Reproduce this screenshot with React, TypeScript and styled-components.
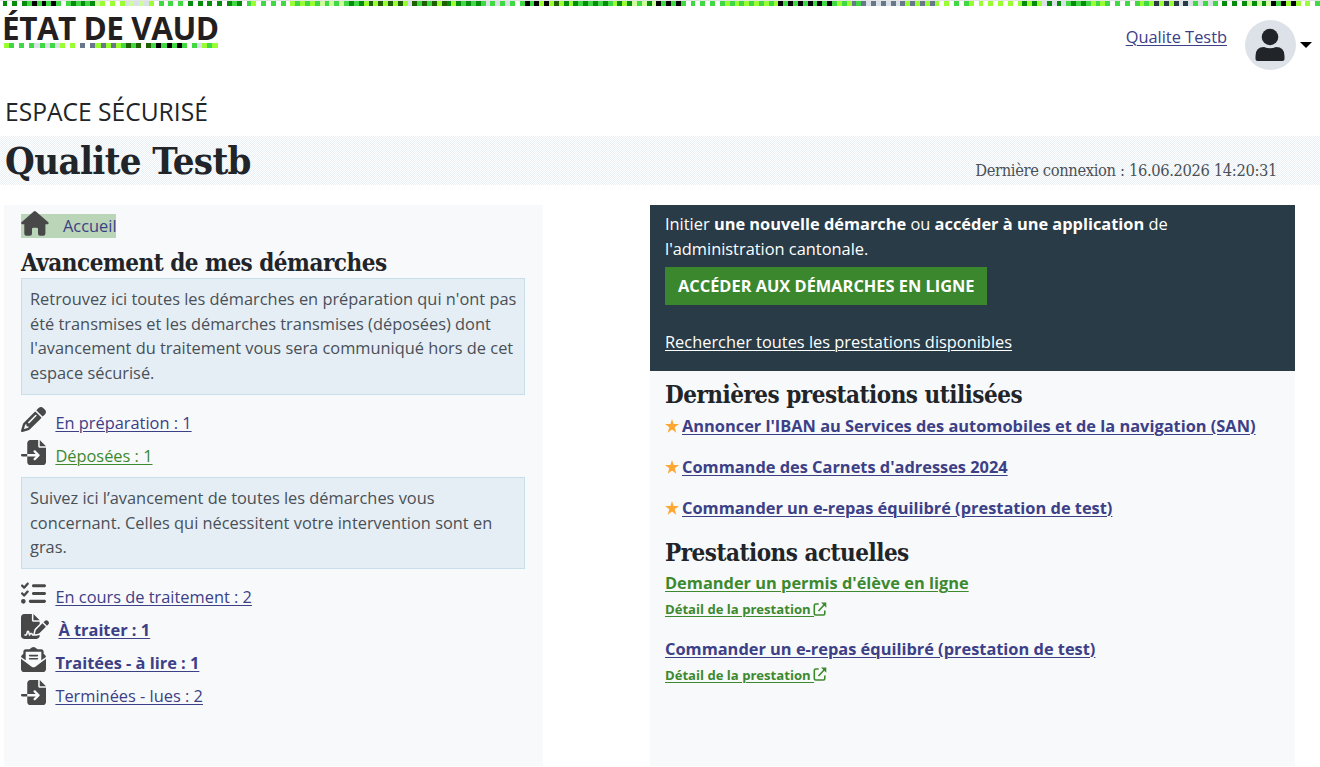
import React from 'react';
import styled, { createGlobalStyle } from 'styled-components';
import { FaPencil, FaFileImport, FaFileSignature, FaListCheck, FaEnvelopeOpenText } from 'react-icons/fa6';

const GlobalStyle = createGlobalStyle`
  * { box-sizing: border-box; }
  body {
    margin: 0;
    background: #fff;
    color: #212529;
    font: 16.39px/24.6px "Open Sans", "Noto Sans", sans-serif;
    overflow: hidden;
  }
  h1, h2, p, ul { margin: 0; padding: 0; }
  ul { list-style: none; }
`;

const palette: Record<string, string> = {
  W: '#ffffff', D: '#058c0c', G: '#40d944', L: '#99ff33', P: '#ccff99',
  S: '#d9e0e6', N: '#66788a', V: '#283b47', K: '#000000', F: '#1f6100',
};

const stripes = (cells: string, size: number, start: number) =>
  `linear-gradient(to right, #fff ${start}px, ${cells
    .split('')
    .map((c, i) => `${palette[c]} ${(start + i * size).toFixed(2)}px ${(start + (i + 1) * size).toFixed(2)}px`)
    .join(', ')})`;

const TOP_CELLS = [
  'DWDWDGKGKGKGWGDGDGDP',
  'LWLWLSPSPSLWGWGWGWDW',
  'DWDWDWDGDWGLWGWGWGWL',
  'GLGLGPGPGPGDGDLFLFLF',
  'LFLSFGFGFLFDLDGDGDGS',
  'GSGSGWGKGKLKLFLDLDGD',
  'GDGDGLDLDPGPDPKGKGKG',
  'WGWGWGWGLGLGLGLGLGLK',
  'GKGKGKGKGKGLGLNGNSNS',
  'NSNSNLNLNLNLWLWGWGLW',
  'LWLWLWLWLDLDLSDSDSGD',
  'GDGLGLGWGWGWGLGLVLVL',
  'VSVSGSGSGWDWDWDPDPDP',
  'KGKLKLWLWGD',
].join('');
const LOGO_CELLS = 'LGWGWGSGSGSLWLWNWNLNLNLGFGFWFGKGKGKGWGSLGL';

const PixelBar = styled.div`
  height: 6px;
  border-top: 1px solid #e4e4e4;
  background: ${stripes(TOP_CELLS, 4.88, 2.5)};
`;
const Header = styled.header`
  display: flex;
  justify-content: space-between;
  align-items: flex-start;
  height: 85px;
  padding: 0 8px 0 2px;
`;
const Logo = styled.div`
  width: 216px;
  height: 37px;
  padding-top: 3px;
  color: #231f20;
  font-size: 31.5px;
  line-height: 37px;
  font-weight: 700;
  white-space: nowrap;
  letter-spacing: -0.5px;
`;
const LogoCells = styled.div`
  height: 5px;
  margin-left: 2px;
  background: ${stripes(LOGO_CELLS, 5.08, 0)};
`;
const User = styled.div`
  display: flex;
  align-items: center;
  padding-top: 14px;
`;
const Avatar = styled.span`
  display: flex;
  width: 51px;
  height: 50px;
  margin: 0 4px 0 18px;
  border-radius: 50%;
  background: #dce2e7;
`;
const Caret = styled.span`
  border: 6px solid transparent;
  border-top: 6px solid #000;
  border-bottom: 0;
`;
const Link = styled.a<{ $green?: boolean; $bold?: boolean; $small?: boolean }>`
  color: ${p => (p.$green ? '#3c892e' : '#3c4086')};
  font-weight: ${p => (p.$bold ? 700 : 400)};
  font-size: ${p => (p.$small ? '13.1px' : 'inherit')};
  text-decoration: underline;
  text-decoration-thickness: 1px;
  text-underline-offset: 2px;
  white-space: nowrap;
`;
const UserLink = styled(Link)`
  padding-bottom: 16px;
`;
const Overline = styled.p`
  height: 45px;
  padding: 3px 5px 0;
  font-size: 24.6px;
  line-height: 35px;
`;
const TitleBand = styled.div`
  display: flex;
  justify-content: space-between;
  height: 49px;
  padding: 0 43px 0 5px;
  background: repeating-conic-gradient(#e9f0f6 0 25%, #fff 0 50%) 0 0 / 2px 2px;
`;
const slab = '"Roboto Slab", "DejaVu Serif Condensed", "DejaVu Serif", serif';
const Title = styled.h1`
  font: 700 38px/49px ${slab};
  letter-spacing: -0.62px;
`;
const LastLogin = styled.p`
  padding-top: 22px;
  color: #495057;
  font: 300 16.4px/26px ${slab};
  letter-spacing: -0.38px;
`;
const Columns = styled.main`
  display: flex;
  justify-content: space-between;
  height: 561px;
  margin: 20px 25px 0 4px;
`;
const Panel = styled.section<{ $width: number }>`
  width: ${p => p.$width}px;
  background: #f8f9fb;
`;
const LeftPanel = styled(Panel)`
  padding: 9px 17px 0;
`;
const Home = styled.a`
  display: flex;
  width: 95px;
  height: 24px;
  margin-bottom: 8px;
  background: #bad5b8;
  color: #3c4086;
  svg { margin: -3px 14px 0 0; flex: none; }
`;
const Heading = styled.h2`
  height: 32px;
  font: 700 24px/33px ${slab};
  letter-spacing: -0.5px;
  white-space: nowrap;
`;
const LaterHeading = styled(Heading)`
  padding: 3px 0;
  height: 38px;
`;
const Info = styled.p<{ $lines: number }>`
  width: 504px;
  height: ${p => p.$lines * 24.6 + 18.4}px;
  padding: 8px;
  border: 1px solid #c8dfeb;
  background: #e5eef5;
  color: #495057;
  white-space: nowrap;
`;
const StatusList = styled.ul`
  padding: 11.7px 0 4.6px;
  & ~ & { padding-top: 11.1px; }
`;
const StatusRow = styled.li`
  display: flex;
  align-items: center;
  height: 33px;
  svg { height: 25px; color: #484848; margin-top: -6px; }
`;
const IconSlot = styled.span<{ $wide?: boolean }>`
  display: flex;
  width: ${p => (p.$wide ? 37.4 : 34.4)}px;
`;
const Promo = styled.div`
  height: 166px;
  padding: 7px 15px;
  background: #283b47;
  color: #fff;
`;
const Button = styled.a`
  display: block;
  width: 322px;
  height: 38px;
  margin: 6px 0 25px;
  padding-left: 13px;
  background: #3b872e;
  font-weight: 700;
  line-height: 38px;
  white-space: nowrap;
`;
const WhiteLink = styled(Link)`
  color: #fff;
`;
const Services = styled.div`
  padding: 7px 15px;
`;
const Recent = styled.li`
  display: flex;
  align-items: center;
  height: 41px;
  padding-bottom: 9px;
  svg { margin-right: 3px; }
`;
const Current = styled.li`
  height: 65.5px;
`;
const Detail = styled.div`
  display: flex;
  align-items: center;
  height: 27.6px;
  svg { margin: 0 0 1px -1px; }
`;

const HouseIcon = () => (
  <svg width="28" height="25" viewBox="0 0 28 25" fill="#484848">
    <path d="M12.7.5 Q13.8-.4 14.9.5 L27.3 11.2 Q28.2 12.8 26.5 13.2 H24.4 V22.5 Q24.4 24.7 22.2 24.7 H19 Q17 24.7 17 22.5 V18 Q17 16.7 15.7 16.7 H12.3 Q11 16.7 11 18 V22.5 Q11 24.7 9 24.7 H5.4 Q3.3 24.7 3.3 22.5 V13.2 H1.2 Q-.5 12.8.5 11.2 Z" />
  </svg>
);
const PersonIcon = () => (
  <svg width="51" height="50" viewBox="0 0 51 50" fill="#212529">
    <circle cx="25" cy="17" r="8.3" />
    <path d="M10.500 39 V36 Q10.500 27 19 27 Q25 29.500 31 27 Q39.500 27 39.500 36 V39 Q39.500 41 37.500 41 H12.500 Q10.500 41 10.500 39Z" />
  </svg>
);
const StarIcon = () => (
  <svg width="14" height="14" viewBox="0 0 13 13" fill="#ffa733">
    <path d="M6.500 0 8 4.700H13L9 7.700 10.500 12.700 6.500 9.700 2.500 12.700 4 7.700 0 4.700H5Z" />
  </svg>
);
const ExternalIcon = () => (
  <svg width="14" height="14" viewBox="0 0 13 14" fill="none" stroke="#3c892e" strokeWidth="1.600">
    <path d="M5.200 2H2.300Q.8 2 .8 3.500V11.500Q.8 13 2.300 13H9.800Q11.300 13 11.300 11.500V8.500M5 9 11 2.500" />
    <path d="M7.500.5H12.800V5.800Z" fill="#3c892e" stroke="none" />
  </svg>
);

export default function App() {
  return (
    <>
      <GlobalStyle />
      <PixelBar />
      <Header>
        <div>
          <Logo>ÉTAT DE VAUD</Logo>
          <LogoCells />
        </div>
        <User>
          <UserLink>Qualite Testb</UserLink>
          <Avatar><PersonIcon /></Avatar>
          <Caret />
        </User>
      </Header>
      <Overline>ESPACE SÉCURISÉ</Overline>
      <TitleBand>
        <Title>Qualite Testb</Title>
        <LastLogin>Dernière connexion : 16.06.2026 14:20:31</LastLogin>
      </TitleBand>
      <Columns>
        <LeftPanel $width={539}>
          <Home><HouseIcon />Accueil</Home>
          <Heading>Avancement de mes démarches</Heading>
          <Info $lines={4}>
            Retrouvez ici toutes les démarches en préparation qui n'ont pas<br />
            été transmises et les démarches transmises (déposées) dont<br />
            l'avancement du traitement vous sera communiqué hors de cet<br />
            espace sécurisé.
          </Info>
          <StatusList>
            <StatusRow><IconSlot><FaPencil size={25} /></IconSlot><Link>En préparation : 1</Link></StatusRow>
            <StatusRow><IconSlot><FaFileImport size={25} /></IconSlot><Link $green>Déposées : 1</Link></StatusRow>
          </StatusList>
          <Info $lines={3}>
            Suivez ici l’avancement de toutes les démarches vous<br />
            concernant. Celles qui nécessitent votre intervention sont en<br />
            gras.
          </Info>
          <StatusList>
            <StatusRow><IconSlot><FaListCheck size={25} /></IconSlot><Link>En cours de traitement : 2</Link></StatusRow>
            <StatusRow><IconSlot $wide><FaFileSignature size={28} /></IconSlot><Link $bold>À traiter : 1</Link></StatusRow>
            <StatusRow><IconSlot><FaEnvelopeOpenText size={25} /></IconSlot><Link $bold>Traitées - à lire : 1</Link></StatusRow>
            <StatusRow><IconSlot><FaFileImport size={25} /></IconSlot><Link>Terminées - lues : 2</Link></StatusRow>
          </StatusList>
        </LeftPanel>
        <Panel $width={645}>
          <Promo>
            <p>
              Initier <b>une nouvelle démarche</b> ou <b>accéder à une application</b> de<br />
              l'administration cantonale.
            </p>
            <Button>ACCÉDER AUX DÉMARCHES EN LIGNE</Button>
            <WhiteLink>Rechercher toutes les prestations disponibles</WhiteLink>
          </Promo>
          <Services>
            <Heading>Dernières prestations utilisées</Heading>
            <ul>
              <Recent><StarIcon /><Link $bold>Annoncer l'IBAN au Services des automobiles et de la navigation (SAN)</Link></Recent>
              <Recent><StarIcon /><Link $bold>Commande des Carnets d'adresses 2024</Link></Recent>
              <Recent><StarIcon /><Link $bold>Commander un e-repas équilibré (prestation de test)</Link></Recent>
            </ul>
            <LaterHeading>Prestations actuelles</LaterHeading>
            <ul>
              <Current>
                <Link $bold $green>Demander un permis d'élève en ligne</Link>
                <Detail><Link $bold $green $small>Détail de la prestation&nbsp;</Link><ExternalIcon /></Detail>
              </Current>
              <Current>
                <Link $bold>Commander un e-repas équilibré (prestation de test)</Link>
                <Detail><Link $bold $green $small>Détail de la prestation&nbsp;</Link><ExternalIcon /></Detail>
              </Current>
            </ul>
          </Services>
        </Panel>
      </Columns>
    </>
  );
}
